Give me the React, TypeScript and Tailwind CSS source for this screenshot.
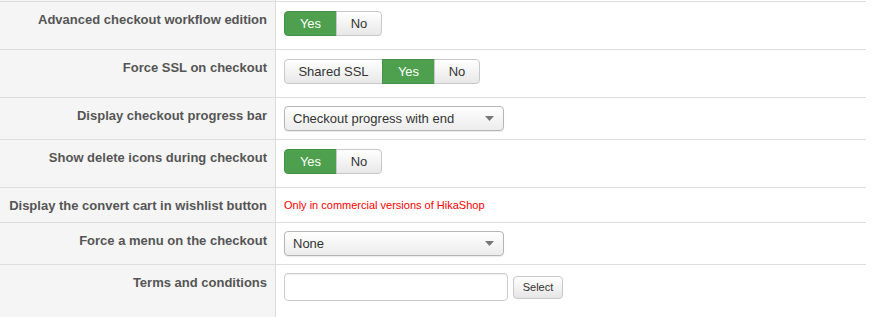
import React from 'react';

const btnBase =
  'h-[25px] px-0 flex items-center justify-center text-[13px] border font-["Liberation_Sans",Arial,sans-serif]';
const btnOff =
  'bg-gradient-to-b from-white to-[#e8e8e8] border-[#c8c8c8] text-[#333] shadow-[inset_0_1px_0_rgba(255,255,255,0.4)]';
const btnOn = 'bg-[#4e9f4e] border-[#44924a] text-white';

type Opt = { label: string; w: string; on?: boolean };

function Toggle({ options }: { options: Opt[] }) {
  return (
    <div className="flex">
      {options.map((o, i) => (
        <div
          key={o.label}
          className={`${btnBase} ${o.w} ${o.on ? btnOn : btnOff} ${i === 0 ? 'rounded-l-[4px]' : '-ml-px'} ${
            i === options.length - 1 ? 'rounded-r-[4px]' : ''
          }`}
        >
          {o.label}
        </div>
      ))}
    </div>
  );
}

function Select({ value }: { value: string }) {
  return (
    <div className="w-[220px] h-[25px] flex items-center justify-between pl-[8px] pr-[9px] rounded-[4px] border border-[#b5b5b5] bg-gradient-to-b from-white to-[#ececec] text-[13px] text-[#333] shadow-[0_1px_1px_rgba(0,0,0,0.08)]">
      <span>{value}</span>
      <svg width="9" height="5" viewBox="0 0 9 5">
        <path d="M0 0h9L4.5 5z" fill="#777" />
      </svg>
    </div>
  );
}

function Row({ label, h, pt, children }: { label: string; h: string; pt: string; children: React.ReactNode }) {
  return (
    <div className={`flex border-t border-[#dddddd] ${h}`}>
      <div className="w-[276px] shrink-0 bg-[#f5f5f5] border-r border-[#dddddd] pr-[8px] pt-[9px] text-right text-[13px] leading-[18px] font-bold text-[#555]">
        {label}
      </div>
      <div className={`flex-1 pl-[8px] ${pt}`}>{children}</div>
    </div>
  );
}

export default function App() {
  return (
    <div className="w-[875px] h-[317px] overflow-hidden bg-white font-['Liberation_Sans',Arial,sans-serif]">
      <div className="w-[866px]">
        <div className="flex h-px">
          <div className="w-[276px] bg-[#f5f5f5] border-r border-[#dddddd]" />
        </div>
        <Row label="Advanced checkout workflow edition" h="h-[48px]" pt="pt-[9px]">
          <Toggle options={[{ label: 'Yes', w: 'w-[53px]', on: true }, { label: 'No', w: 'w-[46px]' }]} />
        </Row>
        <Row label="Force SSL on checkout" h="h-[48px]" pt="pt-[9px]">
          <Toggle
            options={[
              { label: 'Shared SSL', w: 'w-[99px]' },
              { label: 'Yes', w: 'w-[53px]', on: true },
              { label: 'No', w: 'w-[46px]' },
            ]}
          />
        </Row>
        <Row label="Display checkout progress bar" h="h-[42px]" pt="pt-[8px]">
          <Select value="Checkout progress with end" />
        </Row>
        <Row label="Show delete icons during checkout" h="h-[48px]" pt="pt-[9px]">
          <Toggle options={[{ label: 'Yes', w: 'w-[53px]', on: true }, { label: 'No', w: 'w-[46px]' }]} />
        </Row>
        <Row label="Display the convert cart in wishlist button" h="h-[35px]" pt="pt-[11px]">
          <span className="text-[11px] leading-[13px] text-[#ff0000] block">Only in commercial versions of HikaShop</span>
        </Row>
        <Row label="Force a menu on the checkout" h="h-[42px]" pt="pt-[8px]">
          <Select value="None" />
        </Row>
        <Row label="Terms and conditions" h="h-[60px]" pt="pt-[8px]">
          <div className="flex items-start gap-[5px]">
            <div className="w-[224px] h-[28px] rounded-[4px] border border-[#cccccc] bg-white shadow-[inset_0_1px_1px_rgba(0,0,0,0.075)]" />
            <div className="mt-[3px] w-[50px] h-[23px] flex items-center justify-center rounded-[4px] border border-[#c8c8c8] bg-gradient-to-b from-white to-[#e6e6e6] text-[11px] text-[#333]">
              Select
            </div>
          </div>
        </Row>
      </div>
    </div>
  );
}
